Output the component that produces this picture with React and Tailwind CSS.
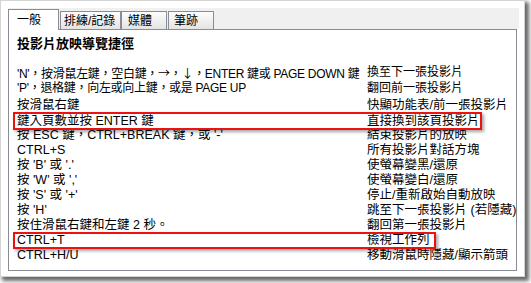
const arrow = (c) => <span className="font-['Noto_Sans_CJK_TC',sans-serif]">{c}</span>

const rows = [
  [<>'N'，按滑鼠左鍵，空白鍵，{arrow('→')}，{arrow('↓')}，ENTER 鍵或 PAGE DOWN 鍵</>, '換至下一張投影片', 'h-[15.5px] text-[12px]'],
  ["'P'，退格鍵，向左或向上鍵，或是 PAGE UP", '翻回前一張投影片', 'h-[17.5px] text-[12px]'],
  ['按滑鼠右鍵', '快顯功能表/前一張投影片', 'h-[15.5px] text-[12.5px]'],
  ['鍵入頁數並按 ENTER 鍵', '直接換到該頁投影片', 'h-[14.9px] text-[12.5px]'],
  ["按 ESC 鍵，CTRL+BREAK 鍵，或 '-'", '結束投影片的放映', 'h-[14.9px] text-[12.5px]'],
  ['CTRL+S', '所有投影片對話方塊', 'h-[14.9px] text-[12.5px]'],
  ["按 'B' 或 '.'", '使螢幕變黑/還原', 'h-[14.9px] text-[12.5px]'],
  ["按 'W' 或 ','", '使螢幕變白/還原', 'h-[14.9px] text-[12.5px]'],
  ["按 'S' 或 '+'", '停止/重新啟始自動放映', 'h-[14.9px] text-[12.5px]'],
  ["按 'H'", '跳至下一張投影片 (若隱藏)', 'h-[14.9px] text-[12.5px]'],
  ['按住滑鼠右鍵和左鍵 2 秒。', '翻回第一張投影片', 'h-[14.9px] text-[12.5px]'],
  ['CTRL+T', '檢視工作列', 'h-[14.9px] text-[12.5px]'],
  ['CTRL+H/U', '移動滑鼠時隱藏/顯示箭頭', 'h-[14.9px] text-[12.5px]'],
]

export default function App() {
  return (
    <div className="w-[531px] h-[283px] bg-white overflow-hidden font-['Liberation_Sans','Noto_Sans_CJK_TC',sans-serif] text-black">
      <div className="w-[525px] h-[277px] border border-[#d4d4d4] bg-white shadow-[3px_3px_4px_1px_rgba(0,0,0,0.6)]">
        {/* Tabs */}
        <div className="mt-[7px] ml-[7px] w-[511px] h-[21px] bg-[#f0f0f0] flex items-end text-[12px]">
          <div className="relative z-10 -mb-px w-[51px] h-[21px] bg-white border-l border-t border-r border-[#898c95] pl-[8px] pt-[3px] leading-[14px]">
            一般
          </div>
          <div className="ml-px w-[61px] h-[18px] bg-gradient-to-b from-[#fdfdfd] to-[#e4e4e4] border-l border-t border-r border-[#898c95] pl-[3px] pt-[2px] leading-[14px]">
            排練/記錄
          </div>
          <div className="w-[46px] h-[18px] bg-gradient-to-b from-[#fdfdfd] to-[#e4e4e4] border-l border-t border-r border-[#898c95] pl-[6px] pt-[2px] leading-[14px]">
            媒體
          </div>
          <div className="ml-px w-[46px] h-[18px] bg-gradient-to-b from-[#fdfdfd] to-[#e4e4e4] border-l border-t border-r border-[#898c95] pl-[5px] pt-[2px] leading-[14px]">
            筆跡
          </div>
        </div>

        {/* Panel */}
        <div className="relative ml-[7px] w-[509px] h-[242px] border border-[#898c95] bg-white pl-[8px] pt-[6px]">
          <div className="text-[13px] font-bold leading-[15px]">投影片放映導覽捷徑</div>
          <div className="mt-[14px] grid grid-cols-[350px_1fr]">
            {rows.map(([keys, action, cls], i) => (
              <div key={i} className="contents">
                <div className={`${cls} whitespace-nowrap leading-[15px] ${i < 2 ? 'tracking-[-0.3px]' : ''}`}>{keys}</div>
                <div className={`${cls} whitespace-nowrap leading-[15px]`}>{action}</div>
              </div>
            ))}
          </div>

          {/* highlight boxes */}
          <div className="absolute left-[4px] top-[82px] w-[469px] h-[18px] border-2 border-[#ee1111] shadow-[2px_2px_3px_rgba(0,0,0,0.35)]"></div>
          <div className="absolute left-[4px] top-[202px] w-[423px] h-[17px] border-2 border-[#ee1111] shadow-[2px_2px_3px_rgba(0,0,0,0.35)]"></div>
        </div>
      </div>
    </div>
  )
}
